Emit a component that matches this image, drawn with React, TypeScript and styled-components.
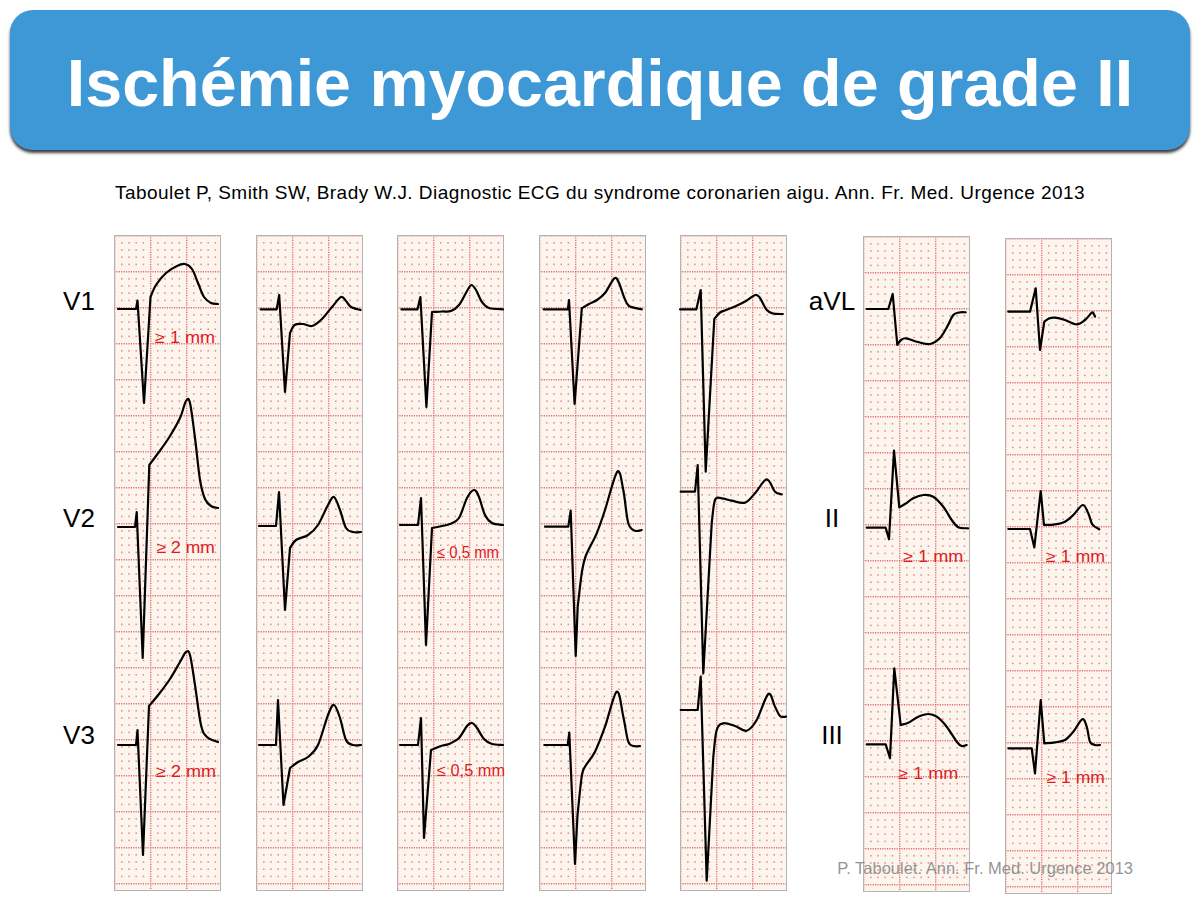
import * as React from 'react';
import styled, { createGlobalStyle } from 'styled-components';

type Pt = [number, number];

interface ITrace {
  sharp: Pt[];
  smooth: Pt[];
}

interface INote {
  x: number;
  y: number;
  w: number;
  text: string;
}

interface IStrip {
  id: string;
  before: number;
  shift: number;
  traces: ITrace[];
  notes: INote[];
}

const GlobalStyle = createGlobalStyle`
  html, body {
    margin: 0;
    padding: 0;
    background: #ffffff;
  }
  body {
    font-family: "Liberation Sans", Arial, sans-serif;
  }
`;

const Slide = styled.div`
  position: relative;
  width: 1200px;
  height: 900px;
  overflow: hidden;
  background: #ffffff;
`;

const Header = styled.header`
  margin: 10px 10px 0;
  height: 140px;
  border-radius: 23px;
  background: #3e98d6;
  box-shadow: 0 3px 3px rgba(0, 0, 0, 0.75);
  display: flex;
  align-items: center;
  justify-content: center;
  padding-top: 6px;
  box-sizing: border-box;
`;

const Title = styled.h1`
  margin: 0;
  color: #ffffff;
  font-family: "Liberation Sans", Arial, sans-serif;
  font-weight: 700;
  font-size: 66.4px;
  line-height: 67px;
  white-space: nowrap;
`;

const Reference = styled.p`
  margin: 32px 0 0;
  text-align: center;
  font-size: 19px;
  letter-spacing: 0.45px;
  line-height: 22px;
  color: #000000;
  white-space: nowrap;
`;

const StripRow = styled.div`
  display: flex;
  align-items: flex-start;
  margin-top: 31px;
`;

const LeadColumn = styled.div<{ $left: number; $width: number; $pad: number }>`
  flex: none;
  margin-left: ${(p) => p.$left}px;
  width: ${(p) => p.$width}px;
  padding-left: ${(p) => p.$pad}px;
  padding-top: 51px;
  box-sizing: border-box;
  display: flex;
  flex-direction: column;
  align-items: center;
  gap: 187px;
`;

const LeadLabel = styled.span`
  font-size: 26px;
  line-height: 30px;
  color: #000000;
`;

const Paper = styled.div<{ $before: number; $shift: number }>`
  flex: none;
  margin-left: ${(p) => p.$before}px;
  margin-top: ${(p) => p.$shift}px;
  width: 105px;
  height: 654px;
  border: 1px solid #b3b3b3;
  background: #fcf5ee;
`;

const Trace = styled.svg`
  display: block;
  overflow: visible;
`;

const Credit = styled.div`
  position: absolute;
  right: 67px;
  top: 858px;
  font-size: 16.5px;
  line-height: 20px;
  color: rgba(120, 120, 120, 0.8);
  white-space: nowrap;
`;

const buildPath = (t: ITrace) => {
  let d = 'M' + t.sharp.map((p) => `${p[0]} ${p[1]}`).join(' L');
  const pts: Pt[] = [t.sharp[t.sharp.length - 1], ...t.smooth];
  for (let i = 0; i < pts.length - 1; i++) {
    const p0 = pts[i - 1] || pts[i];
    const p1 = pts[i];
    const p2 = pts[i + 1];
    const p3 = pts[i + 2] || p2;
    const c1x = p1[0] + (p2[0] - p0[0]) / 6;
    const c1y = p1[1] + (p2[1] - p0[1]) / 6;
    const c2x = p2[0] - (p3[0] - p1[0]) / 6;
    const c2y = p2[1] - (p3[1] - p1[1]) / 6;
    d += ` C${c1x.toFixed(1)} ${c1y.toFixed(1)} ${c2x.toFixed(1)} ${c2y.toFixed(1)} ${p2[0]} ${p2[1]}`;
  }
  return d;
};

const strips: IStrip[] = [
  {
    id: 's1',
    before: 0,
    shift: 0,
    traces: [
      {
        sharp: [[4, 74], [22, 74], [23.5, 65.5], [30, 168], [36.5, 62]],
        smooth: [[42, 50], [52, 38], [63, 31], [71, 29], [78, 34], [84, 48], [90, 62], [97, 68], [104, 69]],
      },
      {
        sharp: [[4, 292], [21, 292], [22.7, 277], [28.7, 423], [35.3, 230]],
        smooth: [[45, 217], [56, 201], [66, 183], [72, 166], [76, 168], [81, 203], [86, 245], [91, 264], [97, 271], [104, 273]],
      },
      {
        sharp: [[4, 510], [22, 510], [23.5, 495], [29, 620], [35, 471]],
        smooth: [[45, 459], [56, 444], [66, 427], [72, 417], [76, 420], [81, 450], [87, 490], [93, 502], [104, 507]],
      },
    ],
    notes: [
      { x: 41, y: 107.7, w: 60, text: '≥ 1 mm' },
      { x: 42.7, y: 318.3, w: 58, text: '≥ 2 mm' },
      { x: 42, y: 542, w: 60, text: '≥ 2 mm' },
    ],
  },
  {
    id: 's2',
    before: 34.5,
    shift: 0,
    traces: [
      {
        sharp: [[4.6, 74.3], [20.7, 74.3], [23.2, 60], [29, 157], [34, 98]],
        smooth: [[38.6, 90], [47, 89], [56, 91], [66, 84], [76, 72], [85, 62], [90, 66], [95, 72], [104.6, 75]],
      },
      {
        sharp: [[3, 291], [20, 291], [23, 257], [29, 375], [34, 313]],
        smooth: [[40, 305], [52, 300], [62, 290], [72, 270], [78, 262], [84, 275], [90, 293], [97, 297], [105, 297]],
      },
      {
        sharp: [[3, 510], [20, 510], [22, 465], [27.5, 570], [34, 533]],
        smooth: [[42, 527], [52, 522], [62, 510], [72, 480], [78, 470], [84, 483], [90, 505], [97, 510], [105, 510]],
      },
    ],
    notes: [],
  },
  {
    id: 's3',
    before: 34.5,
    shift: 0,
    traces: [
      {
        sharp: [[4.4, 74.3], [20.5, 74.3], [23.4, 62], [29.4, 172], [35, 77]],
        smooth: [[45, 76.5], [54, 76], [62, 70], [70, 56], [74.4, 50], [79, 55], [85, 67], [92, 73], [106, 74.3]],
      },
      {
        sharp: [[3, 290], [21, 290], [24, 263], [29, 410], [35, 293]],
        smooth: [[45, 291], [53, 289], [62, 283], [70, 263], [77, 255], [82, 262], [88, 280], [95, 288], [106, 290]],
      },
      {
        sharp: [[3, 510], [21, 510], [24, 483], [27, 603], [34, 515]],
        smooth: [[44, 511], [52, 509], [62, 503], [70, 491], [75, 488], [80, 493], [87, 504], [95, 509], [106, 510]],
      },
    ],
    notes: [
      { x: 40, y: 323, w: 62, text: '≤ 0,5 mm' },
      { x: 40, y: 541, w: 68, text: '≤ 0,5 mm' },
    ],
  },
  {
    id: 's4',
    before: 34.5,
    shift: 0,
    traces: [
      {
        sharp: [[4.6, 74.3], [28.9, 74.3], [30, 65], [35.6, 169], [42.8, 73.3]],
        smooth: [[50, 69], [58, 65], [66, 58], [75.3, 43.3], [80, 48], [85, 62], [90, 71], [102.8, 74.3]],
      },
      {
        sharp: [[6, 291.7], [29.3, 291.7], [31.7, 275.7], [36.7, 421], [38.7, 371.7]],
        smooth: [[42.7, 338.3], [46.7, 321], [57.7, 298.3], [66, 275], [78.3, 236.7], [84.3, 255], [89.3, 288.3], [96, 295.7], [102.7, 295]],
      },
      {
        sharp: [[5.3, 510], [28.7, 510], [30.3, 497.7], [36, 629], [38.5, 580]],
        smooth: [[42.7, 541.7], [46, 531.7], [56, 516.7], [66, 491.7], [77.7, 456.7], [84.3, 481.7], [89.3, 506.7], [95, 511], [101, 511]],
      },
    ],
    notes: [],
  },
  {
    id: 's5',
    before: 34.5,
    shift: 0,
    traces: [
      {
        sharp: [[0, 74.3], [16.4, 74.3], [20.7, 55], [25.7, 236.7], [34.3, 84]],
        smooth: [[40, 77.5], [46, 75], [56, 71], [66, 66], [75.4, 60], [80, 63], [86.8, 75], [93, 78.5], [102.8, 79]],
      },
      {
        sharp: [[0.7, 256.7], [15, 256.7], [17.7, 230], [23.3, 438.3], [31.7, 288.3]],
        smooth: [[35, 265], [41.7, 263.3], [51.7, 265.7], [65, 267.7], [75, 258.3], [86.7, 244.3], [95, 256.7], [101.7, 259.3]],
      },
      {
        sharp: [[0.7, 475], [17.7, 475], [20.7, 441.7], [26.7, 645.7], [33.3, 521.7]],
        smooth: [[36.7, 495], [43.3, 488.3], [55, 491], [66.7, 495.7], [76.7, 485], [88.3, 459], [95, 471.7], [100, 481], [106, 481.7]],
      },
    ],
    notes: [],
  },
];

const limbStrips: IStrip[] = [
  {
    id: 's6',
    before: 0,
    shift: 1,
    traces: [
      {
        sharp: [[3.7, 73], [25.3, 73], [29.7, 58], [34.3, 109]],
        smooth: [[38, 104], [43, 102.3], [55, 106], [67, 108], [77, 102], [84, 91], [90.3, 79], [96, 76.5], [102.7, 76.3]],
      },
      {
        sharp: [[3.7, 291.7], [22.7, 291.7], [26, 303.3], [31, 214.7], [36.3, 271.3]],
        smooth: [[42, 268], [50.3, 262.3], [60.3, 259], [70.3, 260.7], [80.3, 270.7], [88.7, 284], [95.3, 291.3], [105, 292.3]],
      },
      {
        sharp: [[3.7, 508.3], [22.7, 508.3], [27, 522.3], [31.3, 432.3], [37.7, 489]],
        smooth: [[45.3, 486.7], [55.3, 480.7], [65.3, 478], [73.7, 480.7], [83.7, 490.7], [93.7, 505.7], [98.7, 510], [103.7, 509]],
      },
    ],
    notes: [
      { x: 40.3, y: 325.7, w: 60, text: '≥ 1 mm' },
      { x: 35.3, y: 543, w: 60, text: '≥ 1 mm' },
    ],
  },
  {
    id: 's7',
    before: 35,
    shift: 3,
    traces: [
      {
        sharp: [[3.3, 73.7], [25, 73.7], [30.7, 50.3], [35, 112], [39.3, 83.7]],
        smooth: [[44, 80.5], [50, 79.7], [60, 82], [71.7, 86.3], [80, 82], [86.7, 74.7], [88.5, 75.5], [90, 78.7]],
      },
      {
        sharp: [[3.3, 291], [25, 291], [29.3, 309.3], [35.7, 253], [39, 287]],
        smooth: [[50, 286.3], [60, 283.7], [68.3, 277], [77.7, 267], [83.3, 275.3], [87.3, 286.3], [94.3, 291.3]],
      },
      {
        sharp: [[3.3, 510.3], [26.7, 510.3], [30, 535.3], [35.7, 462], [39.3, 505.3]],
        smooth: [[50, 504.3], [60, 502], [68.3, 493.7], [77.3, 481.3], [81.7, 488.7], [85, 503.7], [90, 507], [95, 507]],
      },
    ],
    notes: [
      { x: 41, y: 323.7, w: 59, text: '≥ 1 mm' },
      { x: 41.7, y: 544.7, w: 58, text: '≥ 1 mm' },
    ],
  },
];

const minorDots: Pt[] = [];
for (let i = 1; i < 5; i++) {
  for (let j = 1; j < 5; j++) {
    minorDots.push([i * 7.2 - 0.2, j * 7.2 - 0.2]);
  }
}

const EcgStrip: React.FC<{ strip: IStrip }> = ({ strip }) => {
  const gridId = `grid-${strip.id}`;
  return (
    <Paper $before={strip.before} $shift={strip.shift}>
      <Trace width={105} height={654} viewBox="0 0 105 654">
        <defs>
          <pattern id={gridId} width={36} height={36} patternUnits="userSpaceOnUse" x={-1} y={-1}>
            <line x1={0.7} y1={0} x2={0.7} y2={36} stroke="#ea6a6a" strokeWidth={1.4} strokeDasharray="1.2 1.2" />
            <line x1={0} y1={0.7} x2={36} y2={0.7} stroke="#ea6a6a" strokeWidth={1.4} strokeDasharray="1.2 1.2" />
            {minorDots.map(([x, y]) => (
              <rect key={`${x}-${y}`} x={x} y={y} width={1.6} height={1.6} fill="#ef8e8e" />
            ))}
          </pattern>
        </defs>
        <rect x={0} y={0} width={105} height={654} fill={`url(#${gridId})`} />
        <g transform="translate(-1 -1)">
          {strip.traces.map((t, i) => (
            <path
              key={i}
              d={buildPath(t)}
              fill="none"
              stroke="#000000"
              strokeWidth={2.2}
              strokeLinejoin="round"
              strokeLinecap="round"
            />
          ))}
          {strip.notes.map((n, i) => (
            <text
              key={i}
              x={n.x}
              y={n.y}
              textLength={n.w}
              lengthAdjust="spacingAndGlyphs"
              fill="#e01a1c"
              fontSize={16}
              fontFamily='"Liberation Sans", Arial, sans-serif'
            >
              {n.text}
            </text>
          ))}
        </g>
      </Trace>
    </Paper>
  );
};

export default function App() {
  return (
    <Slide>
      <GlobalStyle />
      <Header>
        <Title>Ischémie myocardique de grade II</Title>
      </Header>
      <Reference>
        Taboulet P, Smith SW, Brady W.J. Diagnostic ECG du syndrome coronarien aigu. Ann. Fr. Med. Urgence 2013
      </Reference>
      <StripRow>
        <LeadColumn $left={44} $width={70} $pad={0}>
          <LeadLabel>V1</LeadLabel>
          <LeadLabel>V2</LeadLabel>
          <LeadLabel>V3</LeadLabel>
        </LeadColumn>
        {strips.map((s) => (
          <EcgStrip key={s.id} strip={s} />
        ))}
        <LeadColumn $left={0} $width={76} $pad={14}>
          <LeadLabel>aVL</LeadLabel>
          <LeadLabel>II</LeadLabel>
          <LeadLabel>III</LeadLabel>
        </LeadColumn>
        {limbStrips.map((s) => (
          <EcgStrip key={s.id} strip={s} />
        ))}
      </StripRow>
      <Credit>P. Taboulet. Ann. Fr. Med. Urgence 2013</Credit>
    </Slide>
  );
}
